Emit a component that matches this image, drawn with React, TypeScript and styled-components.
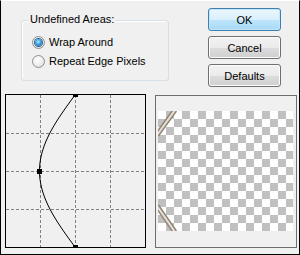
import React from "react";
import styled, { createGlobalStyle } from "styled-components";

const Global = createGlobalStyle`
  html, body { margin: 0; padding: 0; background: #f0f0f0; }
  * { box-sizing: border-box; }
`;

const Dialog = styled.div`
  width: 300px;
  height: 255px;
  background: #f0f0f0;
  border-top: 1px solid #ffffff;
  border-left: 1px solid #000;
  border-right: 1px solid #000;
  border-bottom: 1px solid #000;
  display: flex;
  flex-direction: column;
  font-family: "Liberation Sans", Arial, sans-serif;
  font-size: 11px;
  color: #000;
`;

const TopRow = styled.div`
  height: 93px;
  display: flex;
  align-items: flex-start;
`;

const GroupBox = styled.div`
  position: relative;
  margin-top: 19px;
  margin-left: 20px;
  width: 148px;
  height: 61px;
  border: 1px solid #d5dfe5;
  border-radius: 3px;
  box-shadow: inset 1px 1px 0 #ffffff;
  padding: 15px 0 0 10px;
  display: flex;
  flex-direction: column;
  gap: 6px;
`;

const GroupLabel = styled.span`
  position: absolute;
  left: 6px;
  top: -8px;
  padding: 0 2px;
  background: #f0f0f0;
  line-height: 13px;
  white-space: nowrap;
`;

const RadioRow = styled.label`
  display: flex;
  align-items: center;
  gap: 3px;
  height: 13px;
  line-height: 13px;
  white-space: nowrap;
`;

const RadioCircle = styled.span<{ $checked?: boolean }>`
  position: relative;
  width: 13px;
  height: 13px;
  border-radius: 50%;
  border: 1px solid #8f8f8f;
  background: radial-gradient(circle at 40% 35%, #ffffff 0%, #f0f0f0 45%, #d4d4d4 100%);
  flex: none;
  &::after {
    content: "";
    display: ${(p) => (p.$checked ? "block" : "none")};
    position: absolute;
    left: 2px;
    top: 2px;
    width: 7px;
    height: 7px;
    border-radius: 50%;
    background: radial-gradient(circle at 45% 40%, #b8ecff 0%, #3ca0e0 45%, #0d5a9c 100%);
    box-shadow: 0 0 0 1px #2c628b;
  }
`;

const RadioText = styled.span`
  margin-left: 1px;
`;

const ButtonColumn = styled.div`
  margin-left: auto;
  margin-right: 18px;
  margin-top: 7px;
  display: flex;
  flex-direction: column;
  gap: 5px;
`;

const Button = styled.button<{ $default?: boolean }>`
  width: 73px;
  height: 23px;
  padding: 0;
  font-family: "Liberation Sans", Arial, sans-serif;
  font-size: 11px;
  color: #000;
  border-radius: 3px;
  border: 1px solid ${(p) => (p.$default ? "#3c7fb1" : "#707070")};
  background: ${(p) =>
    p.$default
      ? "linear-gradient(#eaf6fd 0%, #d9f0fc 50%, #bee6fd 51%, #a7d9f5 100%)"
      : "linear-gradient(#f2f2f2 0%, #ebebeb 50%, #dddddd 51%, #cfcfcf 100%)"};
  box-shadow: inset 0 0 0 1px ${(p) => (p.$default ? "#c4e5f6" : "#fcfcfc")};
`;

const BottomRow = styled.div`
  display: flex;
  align-items: flex-end;
  padding-left: 4px;
  gap: 9px;
  margin-top: auto;
  margin-bottom: 6px;
`;

const CurveBox = styled.div`
  width: 141px;
  height: 154px;
  border: 1px solid #000;
  background: #f0f0f0;
  display: flex;
`;

const PreviewBox = styled.div`
  width: 142px;
  height: 153px;
  border: 1px solid #6d6d6d;
  background: #f0f0f0;
  padding: 15px 2px 0 2px;
`;

const Checker = styled.div`
  position: relative;
  width: 135px;
  height: 120px;
  background: repeating-conic-gradient(#c0c0c0 0 25%, #ffffff 0 50%) 0 0 / 16px 16px;
`;

const Overlay = styled.svg`
  position: absolute;
  left: 0;
  top: 0;
`;

const W = 139;
const H = 152;

function curvePath() {
  const pts: string[] = [];
  for (let y = 0; y <= H; y += 2) {
    const t = Math.abs(y - 76) / 76;
    const x = 33.5 + 35.5 * (1 - Math.cos((t * Math.PI) / 2));
    pts.push(`${x.toFixed(2)},${y}`);
  }
  return "M" + pts.join(" L");
}

const Curve: React.FC = () => (
  <svg width={W} height={H} viewBox={`0 0 ${W} ${H}`} style={{ display: "block" }}>
    <g stroke="#808080" strokeWidth="1" strokeDasharray="3 2" shapeRendering="crispEdges">
      <line x1="34.5" y1="0" x2="34.5" y2={H} />
      <line x1="69.5" y1="0" x2="69.5" y2={H} />
      <line x1="104.5" y1="0" x2="104.5" y2={H} />
      <line x1="0" y1="38.5" x2={W} y2="38.5" />
      <line x1="0" y1="76.5" x2={W} y2="76.5" />
      <line x1="0" y1="114.5" x2={W} y2="114.5" />
    </g>
    <path d={curvePath()} fill="none" stroke="#000" strokeWidth="1" />
    <rect x="67" y="-2" width="5" height="4" fill="#000" />
    <rect x="31" y="74" width="5" height="5" fill="#000" />
    <rect x="67" y="150" width="5" height="4" fill="#000" />
  </svg>
);

const Stripes: React.FC = () => (
  <Overlay width="135" height="120" viewBox="0 0 135 120">
    <g strokeLinecap="butt">
      <line x1="-1" y1="24" x2="17" y2="-1" stroke="#8d8a6c" strokeWidth="5" />
      <line x1="-1" y1="24" x2="17" y2="-1" stroke="#e9d9e6" strokeWidth="2" />
      <line x1="-1" y1="95" x2="17" y2="121" stroke="#8d8a6c" strokeWidth="5" />
      <line x1="-1" y1="95" x2="17" y2="121" stroke="#e9d9e6" strokeWidth="2" />
    </g>
  </Overlay>
);

export default function App() {
  return (
    <>
      <Global />
      <Dialog>
        <TopRow>
          <GroupBox>
            <GroupLabel>Undefined Areas:</GroupLabel>
            <RadioRow>
              <RadioCircle $checked />
              <RadioText>Wrap Around</RadioText>
            </RadioRow>
            <RadioRow>
              <RadioCircle />
              <RadioText>Repeat Edge Pixels</RadioText>
            </RadioRow>
          </GroupBox>
          <ButtonColumn>
            <Button $default>OK</Button>
            <Button>Cancel</Button>
            <Button>Defaults</Button>
          </ButtonColumn>
        </TopRow>
        <BottomRow>
          <CurveBox>
            <Curve />
          </CurveBox>
          <PreviewBox>
            <Checker>
              <Stripes />
            </Checker>
          </PreviewBox>
        </BottomRow>
      </Dialog>
    </>
  );
}
